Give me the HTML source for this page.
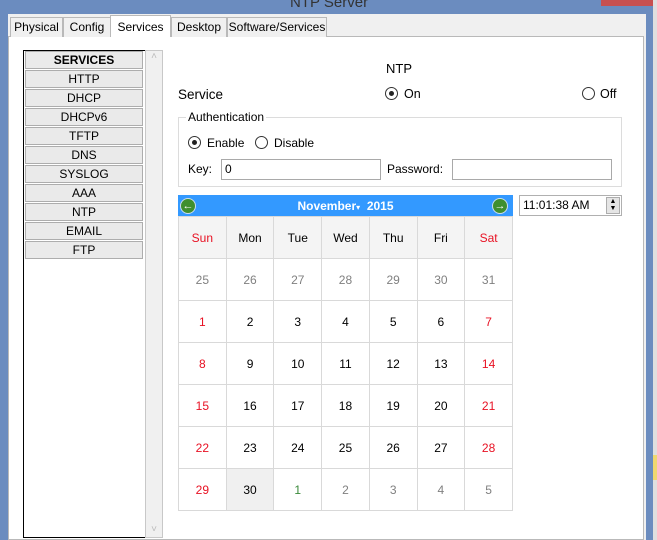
<!DOCTYPE html>
<html><head><style>
*{margin:0;padding:0;box-sizing:border-box}
body{width:657px;height:540px;overflow:hidden;background:#6b8cbf;font-family:"Liberation Sans","DejaVu Sans",sans-serif;font-size:12px;color:#000;position:relative}
.a{position:absolute}
.tab{position:absolute;top:17px;height:20px;border:1px solid #b9b9b9;border-bottom:none;background:#f0f0f0;text-align:center;line-height:19px;font-size:12px;white-space:nowrap}
.btn{position:absolute;left:25px;width:118px;height:18px;background:#eaeaea;border:1px solid #adadad;text-align:center;line-height:16px;font-size:12px}
.cal{border-collapse:collapse;position:absolute;left:178px;top:216px;table-layout:fixed;width:335px}
.cal tr{height:42px}
.cal td{border:1px solid #d9d9d9;text-align:center;font-size:12px;color:#000;padding:0}
.cal td.r{color:#e81123}.cal td.g{color:#808080}.cal td.gr{color:#3a8a3a}
.radio{position:absolute;width:13px;height:13px;border:1px solid #333;border-radius:50%;background:#fff}
.radio.on::after{content:"";position:absolute;left:3px;top:3px;width:5px;height:5px;border-radius:50%;background:#222}
.inp{position:absolute;height:21px;border:1px solid #a9a9a9;background:#fff;padding-left:3px;line-height:19px}
</style></head><body>
<div class="a" style="left:8px;top:14px;width:638px;height:526px;background:#f0f0f0"></div>
<div class="a" style="left:290px;top:-6px;color:#333;font-size:15px">NTP Server</div>
<div class="a" style="left:601px;top:0;width:53px;height:6px;background:#c75050"></div>
<div class="a" style="left:653px;top:0;width:4px;height:540px;background:#dfdfdf"></div>
<div class="a" style="left:653px;top:455px;width:4px;height:25px;background:#f0d870"></div>
<div class="a" style="left:8px;top:36px;width:636px;height:504px;background:#fff;border:1px solid #b9b9b9"></div>
<div class="tab" style="left:10px;width:53px">Physical</div>
<div class="tab" style="left:63px;width:48px">Config</div>
<div class="tab" style="left:110px;top:15px;height:22px;width:61px;background:#fff;line-height:22px">Services</div>
<div class="tab" style="left:171px;width:56px">Desktop</div>
<div class="tab" style="left:227px;width:100px">Software/Services</div>
<div class="a" style="left:23px;top:50px;width:123px;height:488px;border:1px solid #000;border-right:none;background:#fff"></div>
<div class="a" style="left:145px;top:50px;width:18px;height:488px;border:1px solid #c8c8c8;background:#f0f0f0;color:#bbb;font-size:10px;text-align:center">˄<div style="position:absolute;bottom:2px;width:100%">˅</div></div>
<div class="btn" style="top:51px;font-weight:bold">SERVICES</div>
<div class="btn" style="top:70px">HTTP</div>
<div class="btn" style="top:89px">DHCP</div>
<div class="btn" style="top:108px">DHCPv6</div>
<div class="btn" style="top:127px">TFTP</div>
<div class="btn" style="top:146px">DNS</div>
<div class="btn" style="top:165px">SYSLOG</div>
<div class="btn" style="top:184px">AAA</div>
<div class="btn" style="top:203px">NTP</div>
<div class="btn" style="top:222px">EMAIL</div>
<div class="btn" style="top:241px">FTP</div>
<div class="a" style="left:386px;top:61px;font-size:13px">NTP</div>
<div class="a" style="left:178px;top:87px;font-size:13.5px">Service</div>
<div class="radio on" style="left:385px;top:87px"></div><div class="a" style="left:404px;top:87px;font-size:12.5px">On</div>
<div class="radio" style="left:582px;top:87px"></div><div class="a" style="left:600px;top:87px;font-size:12.5px">Off</div>
<div class="a" style="left:178px;top:117px;width:444px;height:70px;border:1px solid #dcdcdc"></div>
<div class="a" style="left:186px;top:110px;background:#fff;padding:0 2px;font-size:12px">Authentication</div>
<div class="radio on" style="left:188px;top:136px"></div><div class="a" style="left:207px;top:136px">Enable</div>
<div class="radio" style="left:255px;top:136px"></div><div class="a" style="left:274px;top:136px">Disable</div>
<div class="a" style="left:188px;top:162px">Key:</div>
<div class="inp" style="left:221px;top:159px;width:160px">0</div>
<div class="a" style="left:387px;top:162px">Password:</div>
<div class="inp" style="left:452px;top:159px;width:160px"></div>
<div class="a" style="left:178px;top:195px;width:335px;height:22px;background:#3399ff;color:#fff;font-weight:bold;font-size:12px;text-align:center;line-height:22px">November<span style="font-size:8px">▾</span>&nbsp;&nbsp;2015</div>
<div class="a" style="left:180px;top:198px;width:16px;height:16px;border-radius:50%;background:#3f8f2f;border:1px solid #cde;color:#fff;font-size:11px;line-height:14px;text-align:center;font-weight:bold">←</div>
<div class="a" style="left:492px;top:198px;width:16px;height:16px;border-radius:50%;background:#3f8f2f;border:1px solid #cde;color:#fff;font-size:11px;line-height:14px;text-align:center;font-weight:bold">→</div>
<div class="inp" style="left:519px;top:195px;width:103px;border-color:#b0b0b0">11:01:38 AM</div>
<div class="a" style="left:606px;top:197px;width:14px;height:17px;border:1px solid #adadad;background:#e5e5e5;font-size:7px;line-height:7px;text-align:center">▲<br>▼</div>
<table class="cal">
<tr style="background:#f4f4f4"><td class="r">Sun</td><td>Mon</td><td>Tue</td><td>Wed</td><td>Thu</td><td>Fri</td><td class="r">Sat</td></tr>
<tr><td class="g">25</td><td class="g">26</td><td class="g">27</td><td class="g">28</td><td class="g">29</td><td class="g">30</td><td class="g">31</td></tr>
<tr><td class="r">1</td><td>2</td><td>3</td><td>4</td><td>5</td><td>6</td><td class="r">7</td></tr>
<tr><td class="r">8</td><td>9</td><td>10</td><td>11</td><td>12</td><td>13</td><td class="r">14</td></tr>
<tr><td class="r">15</td><td>16</td><td>17</td><td>18</td><td>19</td><td>20</td><td class="r">21</td></tr>
<tr><td class="r">22</td><td>23</td><td>24</td><td>25</td><td>26</td><td>27</td><td class="r">28</td></tr>
<tr><td class="r">29</td><td style="background:#f0f0f0">30</td><td class="gr">1</td><td class="g">2</td><td class="g">3</td><td class="g">4</td><td class="g">5</td></tr>
</table>
</body></html>
